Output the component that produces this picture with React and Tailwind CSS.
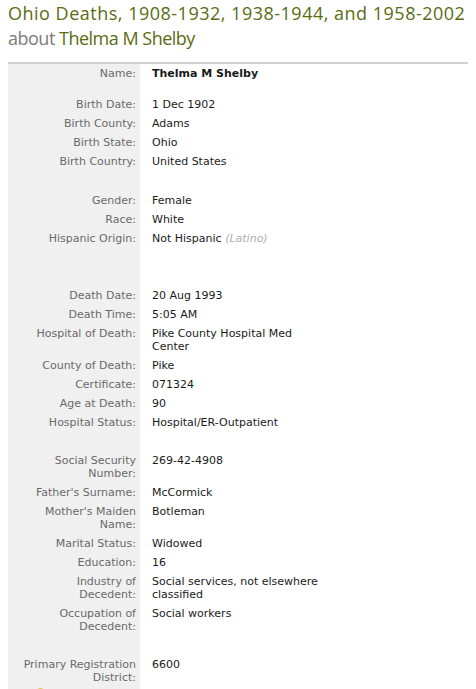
import React from "react";

const rows = [
  { l: ["Name:"], v: ["Thelma M Shelby"], bold: true },
  { gap: 12 },
  { l: ["Birth Date:"], v: ["1 Dec 1902"] },
  { l: ["Birth County:"], v: ["Adams"] },
  { l: ["Birth State:"], v: ["Ohio"] },
  { l: ["Birth Country:"], v: ["United States"] },
  { gap: 20 },
  { l: ["Gender:"], v: ["Female"] },
  { l: ["Race:"], v: ["White"] },
  { l: ["Hispanic Origin:"], v: ["Not Hispanic"], extra: "(Latino)" },
  { gap: 38 },
  { l: ["Death Date:"], v: ["20 Aug 1993"] },
  { l: ["Death Time:"], v: ["5:05 AM"] },
  { l: ["Hospital of Death:"], v: ["Pike County Hospital Med", "Center"] },
  { l: ["County of Death:"], v: ["Pike"] },
  { l: ["Certificate:"], v: ["071324"] },
  { l: ["Age at Death:"], v: ["90"] },
  { l: ["Hospital Status:"], v: ["Hospital/ER-Outpatient"] },
  { gap: 19 },
  { l: ["Social Security", "Number:"], v: ["269-42-4908"] },
  { l: ["Father's Surname:"], v: ["McCormick"] },
  { l: ["Mother's Maiden", "Name:"], v: ["Botleman"] },
  { l: ["Marital Status:"], v: ["Widowed"] },
  { l: ["Education:"], v: ["16"] },
  { l: ["Industry of", "Decedent:"], v: ["Social services, not elsewhere", "classified"] },
  { l: ["Occupation of", "Decedent:"], v: ["Social workers"] },
  { gap: 19 },
  { l: ["Primary Registration", "District:"], v: ["6600"] },
];

function Lines({ items }) {
  return items.map((t, i) => (
    <React.Fragment key={i}>
      {i > 0 && <br />}
      {t}
    </React.Fragment>
  ));
}

export default function App() {
  return (
    <div className="w-[476px] h-[689px] overflow-hidden bg-white" style={{ fontFamily: '"DejaVu Sans", Verdana, sans-serif' }}>
      <div className="pl-[8px] pt-[1px]" style={{ fontFamily: '"Open Sans", "Noto Sans", sans-serif' }}>
        <h1 className="text-[18px] leading-[25px] tracking-[0.5px] text-[#5a6c13]">Ohio Deaths, 1908-1932, 1938-1944, and 1958-2002</h1>
        <div className="text-[18px] leading-[25px] tracking-[-0.5px] text-[#7b7b7b]">
          about <span className="text-[#5a6c13]">Thelma M Shelby</span>
        </div>
      </div>
      <div className="mt-[11px] ml-[8px] w-[460px] border-t-2 border-[#d0d0d0]">
        {rows.map((r, i) =>
          r.gap ? (
            <div key={i} className="flex" style={{ height: r.gap }}>
              <div className="w-[132px] bg-[#f0f0f0]" />
            </div>
          ) : (
            <div key={i} className="flex text-[11px] leading-[13px]">
              <div className="w-[132px] shrink-0 bg-[#f0f0f0] text-right pr-[4px] py-[3px] text-[#6a6a6a]">
                <Lines items={r.l} />
              </div>
              <div className={"pl-[12px] py-[3px] text-[#1a1a1a] " + (r.bold ? "font-bold" : "")}>
                <Lines items={r.v} />
                {r.extra && <span className="italic text-[#b0b0b0]"> {r.extra}</span>}
              </div>
            </div>
          )
        )}
        <div className="flex h-[20px]">
          <div className="w-[132px] bg-[#f0f0f0] relative">
            <div className="absolute left-[28px] top-[1px] w-[9px] h-[9px] rounded-full border-2 border-[#e6c455]" />
          </div>
        </div>
      </div>
    </div>
  );
}
